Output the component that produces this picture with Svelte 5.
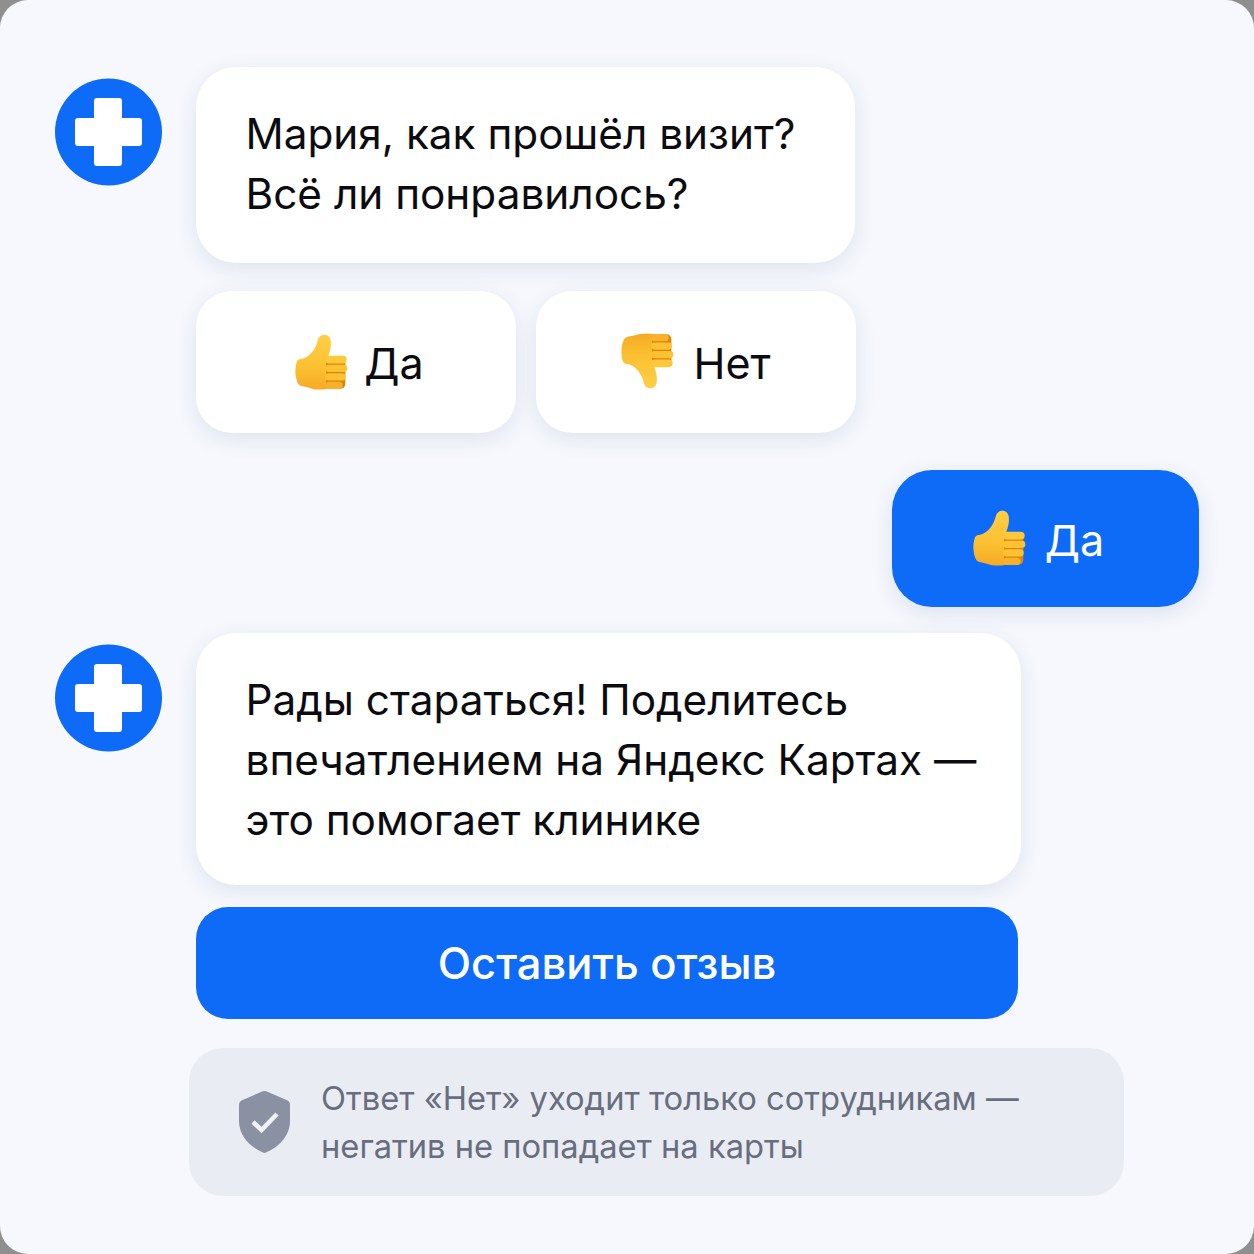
<script>
	const blue = '#0d6bf8'
</script>

{#snippet logo()}
	<svg class="avatar" viewBox="0 0 107 108">
		<circle cx="53.500" cy="54" r="53.500" fill={blue} />
		<path fill="#fff" d="M42 20h22a3 3 0 0 1 3 3v17h17a3 3 0 0 1 3 3v22a3 3 0 0 1-3 3H67v17a3 3 0 0 1-3 3H42a3 3 0 0 1-3-3V68H23a3 3 0 0 1-3-3V43a3 3 0 0 1 3-3h16V23a3 3 0 0 1 3-3z" />
	</svg>
{/snippet}

{#snippet thumb(down)}
	<svg class="thumb" class:down viewBox="42 36 160 172">
		<defs>
			<linearGradient id={down ? 'skinD' : 'skinU'} x1="0" y1="0" x2="0" y2="1">
				<stop offset="0" stop-color="#ffcf45" />
				<stop offset="0.6" stop-color="#fcc032" />
				<stop offset="1" stop-color="#f5ab24" />
			</linearGradient>
		</defs>
		<path fill="url(#{down ? 'skinD' : 'skinU'})" d="M111 58C115 36 147 34 150 60C152 76 148 90 143 104L160 200C130 210 100 208 84 201C70 197 58 198 52 190C41 172 41 140 48 122C51 113 66 115 74 110C90 102 103 86 111 58z" />
		<rect x="136" y="106" width="58" height="98" rx="14" fill="#dc8410" />
		<g fill="#fcc231">
			<rect x="133" y="183" width="53" height="22" rx="11" fill="#f8b128" />
			<rect x="133" y="157.500" width="62" height="21.500" rx="10.500" />
			<rect x="133" y="132" width="67" height="21.500" rx="10.500" />
			<rect x="133" y="105" width="65" height="23" rx="11.500" fill="#fdc93b" />
		</g>
	</svg>
{/snippet}

<main class="card">
	<div class="row">
		{@render logo()}
		<div class="col">
			<div class="bubble first">Мария, как прошёл визит?<br />Всё ли понравилось?</div>
			<div class="answers">
				<div class="answer yes">{@render thumb(false)}<span>Да</span></div>
				<div class="answer">{@render thumb(true)}<span>Нет</span></div>
			</div>
		</div>
	</div>

	<div class="reply">{@render thumb(false)}<span>Да</span></div>

	<div class="row">
		{@render logo()}
		<div class="col">
			<div class="bubble second">Рады стараться! Поделитесь<br />впечатлением на Яндекс Картах —<br />это помогает клинике</div>
			<div class="cta">Оставить отзыв</div>
			<div class="note">
				<svg class="shield" viewBox="0 0 51 62">
					<path fill="#8a91a3" d="M25.500 0c1 0 2 .3 3 .8l19 8.200c2 .9 3.500 2.400 3.500 5V30C51 46 38 57 27 61.500c-1 .5-2 .5-3 0C13 57 0 46 0 30V14c0-2.600 1.500-4.100 3.500-5l19-8.200c1-.5 2-.8 3-.8z" />
					<path fill="none" stroke="#f1f2f6" stroke-width="4.500" d="M14 31l8.500 8L38 23" />
				</svg>
				<p>Ответ «Нет» уходит только сотрудникам —<br />негатив не попадает на карты</p>
			</div>
		</div>
	</div>
</main>

<style>
	:global(body) {
		margin: 0;
		background: #8f8f8f;
	}

	.card {
		box-sizing: border-box;
		width: 1254px;
		height: 1254px;
		padding: 67px 55px 0;
		border-radius: 28px;
		background: #f6f8fd;
		font-family: Inter, "Liberation Sans", sans-serif;
		color: #0c0c10;
		display: flex;
		flex-direction: column;
	}

	.row {
		display: flex;
		gap: 34px;
		align-items: flex-start;
	}

	.avatar {
		width: 107px;
		height: 108px;
		margin-top: 11px;
		flex: none;
	}

	.col {
		display: flex;
		flex-direction: column;
	}

	.bubble {
		box-sizing: border-box;
		background: #fff;
		border-radius: 40px;
		font-size: 42.3px;
		line-height: 60px;
		padding: 37px 0 39px 49.500px;
		box-shadow: 0 6px 22px rgba(40, 60, 110, 0.11);
	}

	.first {
		width: 659px;
	}

	.second {
		width: 825px;
		height: 252px;
		padding-top: 37px;
		padding-bottom: 0;
	}

	.answers {
		display: flex;
		gap: 20px;
		margin-top: 28px;
	}

	.answer {
		box-sizing: border-box;
		width: 320px;
		height: 142px;
		padding-top: 2px;
		background: #fff;
		border-radius: 36px;
		display: flex;
		align-items: center;
		justify-content: center;
		gap: 19px;
		font-size: 43px;
		box-shadow: 0 6px 22px rgba(40, 60, 110, 0.11);
	}

	.yes {
		gap: 16px;
		padding-left: 7px;
	}

	.thumb {
		width: 53px;
		height: 57px;
		margin-top: -4px;
		flex: none;
	}

	.thumb.down {
		transform: scaleY(-1);
	}

	.reply {
		box-sizing: border-box;
		align-self: flex-end;
		width: 307px;
		height: 137px;
		margin-top: 37px;
		margin-bottom: 26px;
		padding: 2px 14px 0 0;
		background: #0d6bf8;
		color: #fff;
		border-radius: 40px;
		display: flex;
		align-items: center;
		justify-content: center;
		gap: 19px;
		font-size: 43px;
		box-shadow: 0 6px 22px rgba(40, 60, 110, 0.12);
	}

	.cta {
		width: 822px;
		height: 112px;
		margin-top: 22px;
		background: #0d6bf8;
		color: #fff;
		border-radius: 32px;
		display: flex;
		align-items: center;
		justify-content: center;
		font-size: 43.500px;
		font-weight: 500;
	}

	.note {
		box-sizing: border-box;
		width: 935px;
		height: 148px;
		margin: 29px 0 0 -7px;
		padding-left: 50px;
		background: #eaecf3;
		border-radius: 34px;
		display: flex;
		align-items: center;
		gap: 31px;
		color: #686e7e;
	}

	.shield {
		width: 51px;
		height: 62px;
		flex: none;
	}

	.note p {
		margin: 0;
		font-size: 32.700px;
		line-height: 48px;
	}
</style>
